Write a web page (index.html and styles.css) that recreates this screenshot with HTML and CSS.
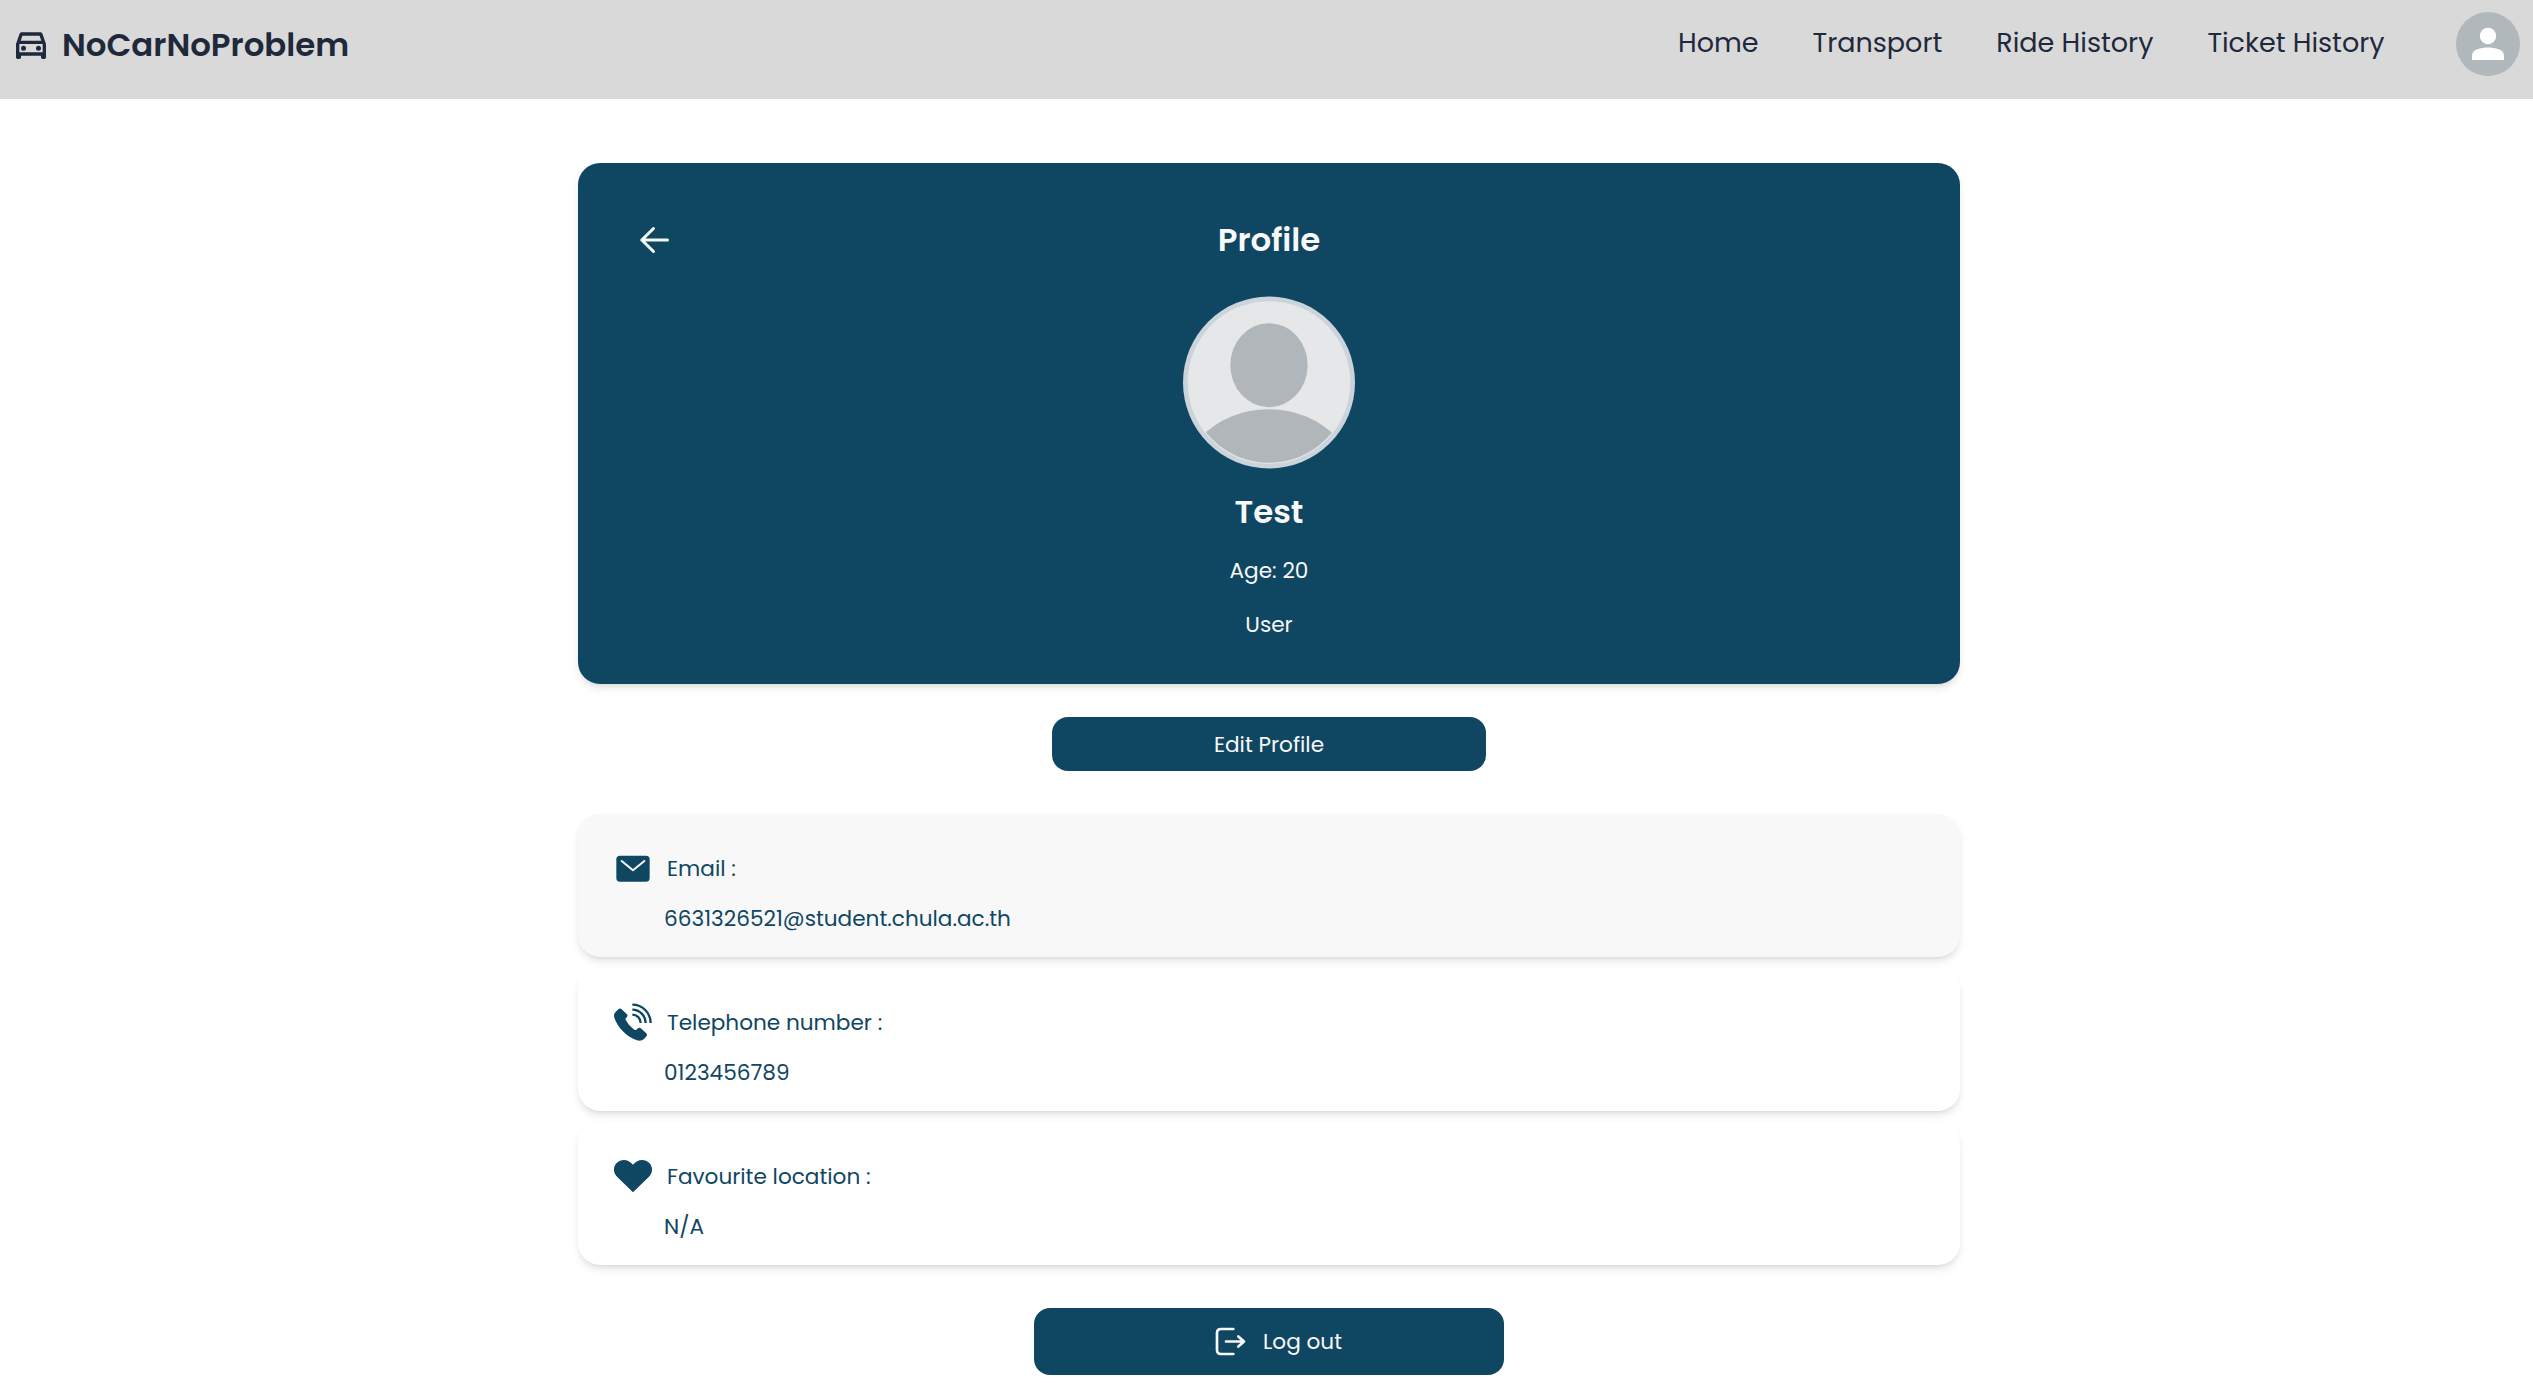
FILE: index.html
```html
<!DOCTYPE html>
<html lang="en">
<head>
    <meta charset="UTF-8">
    <meta name="viewport" content="width=device-width, initial-scale=1.0">
    <title>NoCarNoProblem - Profile</title>
    <link rel="stylesheet" href="styles.css">
</head>
<body>
    <nav class="navbar">
        <a class="brand" href="#">
            <svg class="brand-icon" viewBox="0 0 24 24">
                <path d="M18.92 6.01C18.72 5.42 18.16 5 17.5 5h-11c-.66 0-1.21.42-1.42 1.01L3 12v8c0 .55.45 1 1 1h1c.55 0 1-.45 1-1v-1h12v1c0 .55.45 1 1 1h1c.55 0 1-.45 1-1v-8l-2.08-5.99zM6.85 7h10.29l1.04 3H5.81l1.04-3zM19 17H5v-5h14v5z"/>
                <circle cx="7.5" cy="14.5" r="1.5"/>
                <circle cx="16.5" cy="14.5" r="1.5"/>
            </svg>
            <span>NoCarNoProblem</span>
        </a>
        <div class="nav-links">
            <a href="#">Home</a>
            <a href="#">Transport</a>
            <a href="#">Ride History</a>
            <a href="#">Ticket History</a>
        </div>
        <svg class="nav-avatar" viewBox="0 0 64 64">
            <circle cx="32" cy="32" r="32" fill="#b1b8bb"/>
            <circle cx="32" cy="24" r="8.2" fill="#fff"/>
            <path d="M16 48V43.5C16 37.5 25 35.5 32 35.5S48 37.5 48 43.5V48Z" fill="#fff"/>
        </svg>
    </nav>

    <main class="profile-page">
        <section class="profile-card">
            <div class="profile-header">
                <svg class="back-icon" viewBox="0 0 30 30">
                    <path d="M27.500 15H1.800M13.500 3.500L1.800 15L13.500 26.500"/>
                </svg>
                <h1>Profile</h1>
            </div>
            <svg class="profile-avatar" viewBox="0 0 516 516">
                <clipPath id="face">
                    <circle cx="258" cy="258" r="241"/>
                </clipPath>
                <circle cx="258" cy="258" r="258" fill="#cbd4db"/>
                <circle cx="258" cy="258" r="244" fill="#e5e7e9"/>
                <g clip-path="url(#face)" fill="#b0b6b9">
                    <ellipse cx="258" cy="206" rx="116" ry="126"/>
                    <circle cx="257" cy="631" r="293"/>
                </g>
            </svg>
            <h2>Test</h2>
            <p>Age: 20</p>
            <p>User</p>
        </section>

        <button class="edit-button">Edit Profile</button>

        <section class="info-list">
            <div class="info-card active">
                <div class="info-title">
                    <svg class="info-icon" viewBox="0 0 114 114">
                        <rect x="7" y="20" width="100" height="78" rx="11"/>
                        <path class="flap" d="M23 36L57 64L91 36"/>
                    </svg>
                    <span>Email :</span>
                </div>
                <p>6631326521@student.chula.ac.th</p>
            </div>
            <div class="info-card">
                <div class="info-title">
                    <svg class="info-icon" viewBox="0 0 114 114">
                        <path d="M13 19Q18 14 23 19L38 33Q43 38 38 43Q33 47 35 51Q43 66 59 79Q63 83 67 80L72 76Q77 72 82 77L97 91Q101 96 97 100L91 107Q81 116 69 112C38 101 10 73 1 44Q-2 34 4 28Z"/>
                        <path class="wave" d="M55 5A55 55 0 0 1 110 60M55 20A40 40 0 0 1 95 60M55 35A25 25 0 0 1 80 60"/>
                    </svg>
                    <span>Telephone number :</span>
                </div>
                <p>0123456789</p>
            </div>
            <div class="info-card">
                <div class="info-title">
                    <svg class="info-icon" viewBox="0 0 114 114">
                        <path d="M57 106L9 59C-3 46 -3 30 8 18C21 5 43 5 57 23C71 5 93 5 106 18C117 30 117 46 105 59Z"/>
                    </svg>
                    <span>Favourite location :</span>
                </div>
                <p>N/A</p>
            </div>
        </section>

        <button class="logout-button">
            <svg class="logout-icon" viewBox="0 0 93 87">
                <path d="M55 6H18Q6 6 6 18V69Q6 81 18 81H55M33 43.500H87M70 28.500L87 43.500L70 58.500"/>
            </svg>
            <span>Log out</span>
        </button>
    </main>
</body>
</html>
```
FILE: styles.css
```css
* {
    margin: 0;
    padding: 0;
    box-sizing: border-box;
}

body {
    font-family: 'Poppins', 'Inter', sans-serif;
    font-size: 21.6px;
    line-height: 33px;
    color: #0f4662;
    background-color: #fff;
}

a {
    color: inherit;
    text-decoration: none;
}

/* Navbar */
.navbar {
    display: flex;
    align-items: center;
    height: 99px;
    padding: 12px 13px 23px 11px;
    background-color: #d9d9d9;
    color: #1e293b;
}

.brand {
    display: flex;
    align-items: center;
    gap: 11px;
    font-size: 32.4px;
    font-weight: 600;
}

.brand-icon {
    width: 40px;
    height: 40px;
    fill: currentColor;
}

.nav-links {
    display: flex;
    gap: 54px;
    margin-left: auto;
    margin-right: 71.5px;
    padding-bottom: 4px;
    font-size: 27px;
}

.nav-avatar {
    width: 64px;
    height: 64px;
}

/* Profile card */
.profile-page {
    display: flex;
    flex-direction: column;
    align-items: center;
    padding: 64px 0 8px 5px;
}

.profile-card {
    display: flex;
    flex-direction: column;
    align-items: center;
    width: 1382px;
    height: 521px;
    padding-top: 55px;
    border-radius: 22px;
    background-color: #0f4662;
    color: #f8f8f8;
    box-shadow: 0 5px 8px -1px rgba(0, 0, 0, 0.1), 0 3px 5px -3px rgba(0, 0, 0, 0.1);
}

.profile-header {
    display: grid;
    grid-template-columns: 1fr auto 1fr;
    align-items: center;
    width: 100%;
    height: 43px;
    padding: 0 62px;
}

.back-icon {
    width: 30px;
    height: 30px;
    fill: none;
    stroke: #f8f8f8;
    stroke-width: 3;
    stroke-linecap: round;
    stroke-linejoin: round;
}

h1,
h2 {
    font-size: 32.4px;
    font-weight: 600;
    line-height: 43px;
}

h2 {
    margin-top: 21px;
}

.profile-avatar {
    width: 172px;
    height: 173px;
    margin-top: 35px;
}

.profile-card p {
    margin-top: 21px;
}

/* Buttons */
button {
    border: none;
    border-radius: 16px;
    background-color: #0f4662;
    color: #f8f8f8;
    font: inherit;
    cursor: pointer;
}

.edit-button {
    width: 434px;
    height: 54px;
    margin-top: 33px;
}

.logout-button {
    display: flex;
    align-items: center;
    gap: 17px;
    width: 470px;
    height: 67px;
    margin-top: 43px;
    padding-left: 181px;
}

.logout-icon {
    width: 31px;
    height: 29px;
    fill: none;
    stroke: #f8f8f8;
    stroke-width: 8;
    stroke-linecap: round;
    stroke-linejoin: round;
}

/* Contact info */
.info-list {
    display: flex;
    flex-direction: column;
    gap: 11px;
    width: 1382px;
    margin-top: 43px;
}

.info-card {
    height: 143px;
    padding: 35px 36px 22px;
    border-radius: 22px;
    background-color: #fff;
    box-shadow: 0 5px 8px -1px rgba(0, 0, 0, 0.1), 0 3px 5px -3px rgba(0, 0, 0, 0.1);
}

.info-card.active {
    background-color: #f8f8f8;
}

.info-title {
    display: flex;
    align-items: center;
    gap: 15px;
}

.info-icon {
    width: 38px;
    height: 38px;
    fill: #0f4662;
}

.info-icon .flap {
    fill: none;
    stroke: #f8f8f8;
    stroke-width: 6;
    stroke-linecap: round;
    stroke-linejoin: round;
}

.info-icon .wave {
    fill: none;
    stroke: #0f4662;
    stroke-width: 7;
}

.info-card p {
    margin-top: 15px;
    padding-left: 50px;
}
```
